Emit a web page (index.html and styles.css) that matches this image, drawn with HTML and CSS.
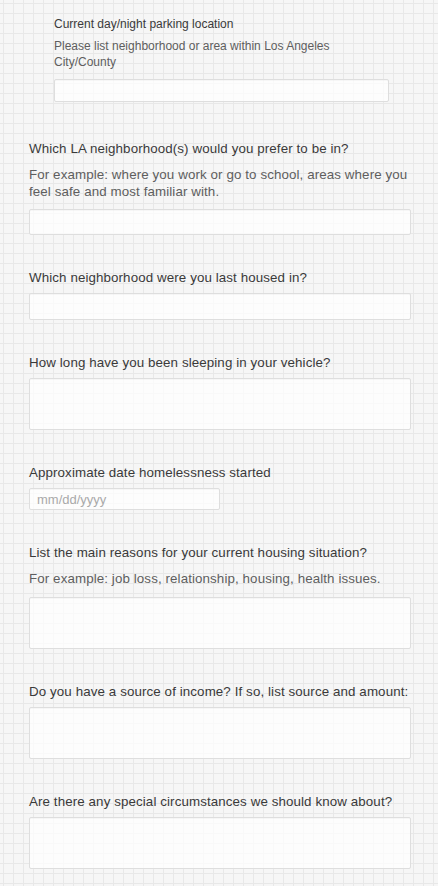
FILE: index.html
```html
<!DOCTYPE html>
<html lang="en">
<head>
<meta charset="utf-8">
<title>Vehicle dwelling intake form</title>
<link rel="stylesheet" href="styles.css">
</head>
<body>
<form class="form">
  <div class="field field-sub">
    <label class="label" for="f1">Current day/night parking location</label>
    <p class="desc">Please list neighborhood or area within Los Angeles City/County</p>
    <input class="input input-short" id="f1" type="text">
  </div>

  <div class="field">
    <label class="label" for="f2">Which LA neighborhood(s) would you prefer to be in?</label>
    <p class="desc">For example: where you work or go to school, areas where you feel safe and most familiar with.</p>
    <input class="input" id="f2" type="text">
  </div>

  <div class="field">
    <label class="label" for="f3">Which neighborhood were you last housed in?</label>
    <input class="input input-tall" id="f3" type="text">
  </div>

  <div class="field">
    <label class="label" for="f4">How long have you been sleeping in your vehicle?</label>
    <textarea class="input area" id="f4"></textarea>
  </div>

  <div class="field">
    <label class="label" for="f5">Approximate date homelessness started</label>
    <input class="input date" id="f5" type="text" placeholder="mm/dd/yyyy">
  </div>

  <div class="field">
    <label class="label" for="f6">List the main reasons for your current housing situation?</label>
    <p class="desc">For example: job loss, relationship, housing, health issues.</p>
    <textarea class="input area" id="f6"></textarea>
  </div>

  <div class="field">
    <label class="label" for="f7">Do you have a source of income? If so, list source and amount:</label>
    <textarea class="input area" id="f7"></textarea>
  </div>

  <div class="field">
    <label class="label" for="f8">Are there any special circumstances we should know about?</label>
    <textarea class="input area" id="f8"></textarea>
  </div>
</form>
</body>
</html>
```

FILE: styles.css
```css
html {
  background-color: #f6f6f6;
  background-image:
    linear-gradient(to right, #e8e8e8 1px, transparent 1px),
    linear-gradient(to bottom, #e8e8e8 1px, transparent 1px);
  background-size: 10px 10px;
  background-position: 3px 3px;
}

body {
  margin: 0;
  font-family: "Liberation Sans", Arial, Helvetica, sans-serif;
  color: #333;
}

.form {
  display: flex;
  flex-direction: column;
  padding: 16px 27px 16px 29px;
}

.field {
  display: flex;
  flex-direction: column;
  align-items: flex-start;
  margin-top: 35px;
}

.field:first-child {
  margin-top: 0;
}

.field-sub {
  margin-left: 25px;
  margin-bottom: 4px;
  width: 335px;
}

.label {
  display: block;
  font-size: 13.35px;
  letter-spacing: 0.1px;
  line-height: 16px;
  color: #3a3a3a;
  margin-bottom: 7px;
}

.desc {
  margin: 3px 0 9px;
  font-size: 13.35px;
  letter-spacing: 0.1px;
  line-height: 16.5px;
  color: #5e5e5e;
}

.field-sub .label,
.field-sub .desc {
  font-size: 12px;
  letter-spacing: 0;
}

.field-sub .label {
  margin-bottom: 6px;
}

.field-sub .desc {
  margin: 0 0 9px;
  line-height: 16px;
}

.input {
  box-sizing: border-box;
  display: block;
  width: 100%;
  height: 26px;
  margin: 0;
  padding: 0 7px;
  border: 1px solid #dedede;
  border-radius: 2px;
  background: rgba(255, 255, 255, 0.72);
  box-shadow: inset 0 1px 1px rgba(0, 0, 0, 0.03);
  font-family: inherit;
  font-size: 12px;
  color: #333;
  outline: none;
}

.input-short {
  height: 23px;
}

.input-tall {
  height: 27px;
}

.area {
  height: 52px;
  resize: none;
}

.date {
  width: 191px;
  height: 22px;
  font-size: 13px;
}

.date::placeholder {
  color: #a9a9a9;
}
```
